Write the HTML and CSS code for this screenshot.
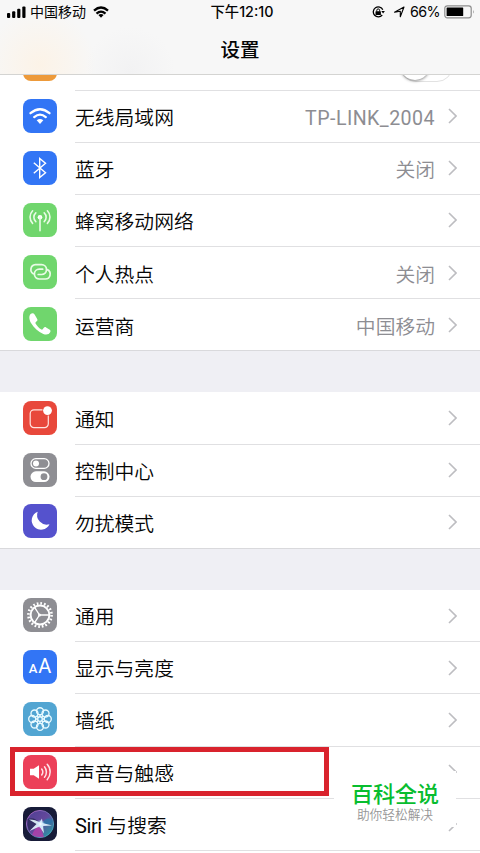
FILE: index.html
```html
<!DOCTYPE html>
<html lang="zh-CN">
<head>
<meta charset="utf-8">
<title>设置</title>
<link rel="stylesheet" href="styles.css">
</head>
<body>
<div class="screen">
  <header class="header">
    <div class="status">
      <div class="status-left">
        <svg class="signal" viewBox="0 0 19 12"><rect x="0" y="7" width="3.2" height="5" rx="1"/><rect x="5.1" y="5.2" width="3.2" height="6.8" rx="1"/><rect x="10.2" y="2.8" width="3.2" height="9.2" rx="1"/><rect x="15.3" y="0.4" width="3.2" height="11.6" rx="1"/></svg>
        <span class="carrier">中国移动</span>
        <svg class="wifi" viewBox="0 0 16 12"><path d="M1 4.600Q8-1.600 15 4.600M3.500 7.600Q8 3.600 12.500 7.600" fill="none" stroke="#000" stroke-width="2.300"/><path d="M5.400 9Q8 6.800 10.600 9L8 11.800Z"/></svg>
      </div>
      <div class="clock">下午12:10</div>
      <div class="status-right">
        <svg class="lock" viewBox="0 0 13 12"><path d="M10.800 3.700A5 5 0 1 0 10.200 9" fill="none" stroke="#000" stroke-width="1.300"/><path d="M9.300 4.900h3.600l-1.800 2.500z"/><rect x="3.500" y="5.200" width="5.400" height="3.900" rx=".5"/><path d="M4.800 5.500V4.300a1.400 1.400 0 0 1 2.800 0v1.200" fill="none" stroke="#000"/></svg>
        <svg class="location" viewBox="0 0 12 12"><path d="M1.500 6.200L11 1 7.300 10.800V5.200Z" fill="none" stroke="#000" stroke-width="1.100" stroke-linejoin="round"/></svg>
        <span class="percent">66%</span>
        <svg class="battery" viewBox="0 0 31 14"><rect x=".8" y=".8" width="26.400" height="12" rx="2.500" fill="none" stroke="#8d8d8d" stroke-width="1.200"/><rect x="2.600" y="2.500" width="16.600" height="8.600" rx=".6"/><path d="M29 4.800q1.400 2 0 4z" fill="#8d8d8d"/></svg>
      </div>
    </div>
    <h1 class="title">设置</h1>
  </header>

  <main class="list">
    <div class="row row-partial">
      <div class="icon orange"></div>
      <div class="cell"><span class="switch"></span></div>
    </div>
    <section class="group">
      <div class="row">
        <svg class="icon blue" viewBox="0 0 34 34"><g fill="none" stroke="#fff" stroke-width="2.300" stroke-linecap="round"><path d="M7.500 14.200Q17 6.200 26.500 14.200M11.200 18.100Q17 13.200 22.800 18.100"/></g><path d="M13.700 21.200Q17 18.600 20.300 21.200L17 25Z" fill="#fff"/></svg>
        <div class="cell"><span class="label">无线局域网</span><span class="value latin">TP-LINK_2004</span><svg class="chevron" viewBox="0 0 9 16"><path d="M1 1l7 7-7 7"/></svg></div>
      </div>
      <div class="row">
        <svg class="icon blue" viewBox="0 0 34 34"><path d="M10.800 11.800L22.500 21.800 16.700 26.500V7.500L22.500 12.200 10.800 22.200" fill="none" stroke="#fff" stroke-width="1.400"/></svg>
        <div class="cell"><span class="label">蓝牙</span><span class="value">关闭</span><svg class="chevron" viewBox="0 0 9 16"><path d="M1 1l7 7-7 7"/></svg></div>
      </div>
      <div class="row">
        <svg class="icon green" viewBox="0 0 34 34"><circle cx="17" cy="14.200" r="2.300" fill="#fff"/><path d="M17 14v13.800M12.800 9.800a6 6 0 0 0 0 8.800M21.200 9.800a6 6 0 0 1 0 8.800M9.600 7.800a9 9 0 0 0 0 12.600M24.400 7.800a9 9 0 0 1 0 12.600" fill="none" stroke="#e9fbe6" stroke-width="1.600" stroke-linecap="round"/></svg>
        <div class="cell"><span class="label">蜂窝移动网络</span><svg class="chevron" viewBox="0 0 9 16"><path d="M1 1l7 7-7 7"/></svg></div>
      </div>
      <div class="row">
        <svg class="icon green" viewBox="0 0 34 34"><g fill="none" stroke="#e9fbe6" stroke-width="1.700" stroke-linecap="round"><path d="M10.300 18.800A4.900 4.900 0 0 1 12.400 9.700h6.200a4.900 4.900 0 0 1 0 9.800h-3.400"/><path d="M24.200 14.600A4.900 4.900 0 0 1 22.300 24h-6a4.900 4.900 0 0 1 0-9.800h3.400"/></g></svg>
        <div class="cell"><span class="label">个人热点</span><span class="value">关闭</span><svg class="chevron" viewBox="0 0 9 16"><path d="M1 1l7 7-7 7"/></svg></div>
      </div>
      <div class="row">
        <svg class="icon green" viewBox="0 0 34 34"><path d="M7.600 7.100C5.800 8.800 6 12.700 8 16c3 5 7.200 9 12.300 10.900 3.200 1.100 5.900.4 7-2 .4-.9.200-1.600-.5-2.100l-3.700-2.400c-.9-.5-1.700-.4-2.300.4l-1.100 1.500c-.5.5-1.100.4-1.700 0-2.200-1.500-4-3.500-5.300-5.600-.4-.7-.4-1.200.2-1.700l1-1c.6-.6.7-1.300.3-2.100l-2.600-4.400c-1-1.600-2.700-1.500-4-.4z" fill="#fff"/></svg>
        <div class="cell"><span class="label">运营商</span><span class="value">中国移动</span><svg class="chevron" viewBox="0 0 9 16"><path d="M1 1l7 7-7 7"/></svg></div>
      </div>
    </section>
    <section class="group spaced">
      <div class="row">
        <svg class="icon red" viewBox="0 0 34 34"><path d="M19.500 8.800H11a3.800 3.800 0 0 0-3.800 3.800v10.200a3.800 3.800 0 0 0 3.800 3.800h10.500a3.800 3.800 0 0 0 3.800-3.800V14.500" fill="none" stroke="#ffe4df" stroke-width="1.200"/><circle cx="24.500" cy="9.600" r="4.400" fill="#fff"/></svg>
        <div class="cell"><span class="label">通知</span><svg class="chevron" viewBox="0 0 9 16"><path d="M1 1l7 7-7 7"/></svg></div>
      </div>
      <div class="row">
        <svg class="icon gray" viewBox="0 0 34 34"><rect x="8" y="5.700" width="18" height="9.600" rx="4.800" fill="none" stroke="#fff" stroke-width="1.300"/><circle cx="13" cy="10.500" r="3" fill="#fff"/><rect x="7.500" y="18.300" width="19" height="10.800" rx="5.400" fill="#fff"/><circle cx="21" cy="23.700" r="3.400" fill="#8e8e93"/></svg>
        <div class="cell"><span class="label">控制中心</span><svg class="chevron" viewBox="0 0 9 16"><path d="M1 1l7 7-7 7"/></svg></div>
      </div>
      <div class="row">
        <svg class="icon purple" viewBox="0 0 34 34"><path d="M14.700 7.700A9.300 9.300 0 1 0 26.500 20.200 9.600 9.600 0 0 1 14.700 7.700Z" fill="#fff"/></svg>
        <div class="cell"><span class="label">勿扰模式</span><svg class="chevron" viewBox="0 0 9 16"><path d="M1 1l7 7-7 7"/></svg></div>
      </div>
    </section>
    <section class="group spaced">
      <div class="row">
        <svg class="icon gray" viewBox="0 0 34 34"><g fill="none" stroke="#fff"><circle cx="17" cy="17" r="9.400" stroke-width="2"/><circle cx="17" cy="17" r="11.600" stroke-width="2.600" stroke-dasharray="1.700 1.944"/><path d="M16 17h10M16.500 17l-5.200-8.200M16.500 17l-5.200 8.200" stroke-width="1.400"/></g><circle cx="16.500" cy="17" r="1.500" fill="#fff"/></svg>
        <div class="cell"><span class="label">通用</span><svg class="chevron" viewBox="0 0 9 16"><path d="M1 1l7 7-7 7"/></svg></div>
      </div>
      <div class="row">
        <div class="icon blue letters"><span class="small-a">A</span><span class="big-a">A</span></div>
        <div class="cell"><span class="label">显示与亮度</span><svg class="chevron" viewBox="0 0 9 16"><path d="M1 1l7 7-7 7"/></svg></div>
      </div>
      <div class="row">
        <svg class="icon cyan" viewBox="0 0 34 34"><g fill="none" stroke="#e8faff" stroke-width="1.350"><circle cx="17" cy="9.200" r="3.500"/><circle cx="22.500" cy="11.500" r="3.500"/><circle cx="24.800" cy="17" r="3.500"/><circle cx="22.500" cy="22.500" r="3.500"/><circle cx="17" cy="24.800" r="3.500"/><circle cx="11.500" cy="22.500" r="3.500"/><circle cx="9.200" cy="17" r="3.500"/><circle cx="11.500" cy="11.500" r="3.500"/><circle cx="17" cy="17" r="2.300"/><path d="M17 12.700v2M17 19.300v2M12.700 17h2M19.300 17h2M14 14l1.400 1.400M18.600 18.600L20 20M20 14l-1.400 1.400M15.400 18.600L14 20"/></g></svg>
        <div class="cell"><span class="label">墙纸</span><svg class="chevron" viewBox="0 0 9 16"><path d="M1 1l7 7-7 7"/></svg></div>
      </div>
      <div class="row">
        <svg class="icon pink" viewBox="0 0 34 34"><path d="M7 13.700h3.700L16 10.300v13.400L10.700 20.300H7z" fill="#fff"/><path d="M18.700 14a5 5 0 0 1 0 6M21.500 11.800a8 8 0 0 1 0 10.400M24.200 9.300a11.500 11.500 0 0 1 0 15.400" fill="none" stroke="#ffe3e8" stroke-width="1.500" stroke-linecap="round"/></svg>
        <div class="cell"><span class="label">声音与触感</span><svg class="chevron" viewBox="0 0 9 16"><path d="M1 1l7 7-7 7"/></svg></div>
        <div class="highlight"></div>
      </div>
      <div class="row">
        <svg class="icon dark" viewBox="0 0 34 34">
          <defs>
            <linearGradient id="orb" x1="0" y1="0" x2="1" y2="1"><stop offset="0" stop-color="#4c3f93"/><stop offset=".48" stop-color="#63479b"/><stop offset="1" stop-color="#19a8a5"/></linearGradient>
            <linearGradient id="ring" x1="0" y1="0" x2="1" y2="1"><stop offset="0" stop-color="#b65abb"/><stop offset=".5" stop-color="#6b70b5"/><stop offset="1" stop-color="#32bdba"/></linearGradient>
            <radialGradient id="core"><stop offset="0" stop-color="#fff"/><stop offset=".4" stop-color="#d9efff" stop-opacity=".8"/><stop offset="1" stop-color="#b6daff" stop-opacity="0"/></radialGradient>
          </defs>
          <circle cx="17" cy="17" r="13.600" fill="url(#orb)" stroke="url(#ring)"/>
          <path d="M4.500 12Q12 9 17 17 9 22 6 24 3.500 18 4.500 12Z" fill="#262653" opacity=".75"/>
          <path d="M18 17Q25 8 30 14 28 19 18 17Z" fill="#2677a9" opacity=".7"/>
          <path d="M17 17Q11 22 9 28 15 31 21 30Z" fill="#bf39ab" opacity=".75"/>
          <path d="M6 12.500Q13 12.500 16.500 15.500L19 11.500 19.500 16 29 18.500 20 19 21 26.500 16.500 19.500 6.500 24 13.500 17Z" fill="#e5f6ff" opacity=".9"/>
          <circle cx="17.500" cy="17" r="4.500" fill="url(#core)"/>
        </svg>
        <div class="cell"><span class="label siri"><span>Siri</span> 与搜索</span><svg class="chevron" viewBox="0 0 9 16"><path d="M1 1l7 7-7 7"/></svg></div>
      </div>
      <div class="row"></div>
    </section>
  </main>
  <aside class="watermark"><strong>百科全说</strong><span>助你轻松解决</span></aside>
</div>
</body>
</html>
```
FILE: styles.css
```css
* { box-sizing: border-box; }
body { margin: 0; background: #fff; color: #050505; font-family: Inter, "Noto Sans CJK SC", sans-serif; }
.screen { position: relative; width: 480px; height: 853px; overflow: hidden; background: #fff; }

.header {
  height: 75px;
  border-bottom: 1px solid #d4d4d2;
  background: radial-gradient(circle at 40px 65px, #fcf3e7 0, rgba(253, 241, 225, 0) 56px), radial-gradient(circle at 130px 72px, #f2f2f3 0, rgba(240, 240, 241, 0) 45px), #f7f7f7;
}
.status { display: grid; grid-template-columns: 1fr auto 1fr; align-items: center; height: 24px; padding: 0 5px 0 7px; font-size: 14px; }
.status-left, .status-right { display: flex; align-items: center; }
.status-right { justify-content: flex-end; }
.signal { width: 19px; height: 12px; margin: -1px 4px 0 0; }
.carrier { line-height: 24px; }
.wifi { width: 16px; height: 12px; margin: -1px 0 0 7px; }
.clock { margin-left: 2px; font-size: 14.300px; font-weight: 500; line-height: 24px; }
.lock { width: 13px; height: 12px; margin-right: 8px; }
.location { width: 12px; height: 12px; margin-right: 5px; }
.percent { font-size: 14px; margin-right: 4px; line-height: 24px; letter-spacing: -.6px; font-size: 14.300px; }
.battery { width: 31px; height: 14px; }
.title { margin: 10px 0 0; font-size: 19.500px; font-weight: 500; line-height: 32px; text-align: center; }

.list { display: flex; flex-direction: column; }
.row { position: relative; display: flex; align-items: center; height: 52.170px; padding-left: 23px; }
.row-partial { height: 15.500px; overflow: hidden; align-items: flex-end; }
.row-partial .icon { margin-bottom: 10px; }
.row-partial .cell { align-items: flex-end; border-bottom: 1px solid #e0e0e2; }
.switch { width: 53px; height: 32px; margin: 0 4px 8px auto; border: 1.500px solid #e2e2e2; border-radius: 16px; background: #fff; }
.switch::before { content: ""; display: block; width: 30px; height: 30px; margin: -.5px 0 0 -1px; border-radius: 50%; background: #fff; box-shadow: 0 1px 3px rgba(0, 0, 0, .45); }
.icon { flex: none; width: 34px; height: 34px; margin-bottom: 2px; border-radius: 8px; }
.cell { flex: 1; align-self: stretch; display: flex; align-items: center; margin-left: 18px; padding-right: 23px; border-bottom: 1px solid #e0e0e2; }
.group .row:last-child .cell { border-bottom: 0; }
.group .row:last-child { height: 51.300px; }
.group { border-bottom: 1px solid #d9d9dc; }
.spaced { border-top: 41px solid #efeff4; }
.label { font-size: 19.800px; line-height: 30px; margin-top: 4px; font-weight: 350; white-space: nowrap; }
.spaced .label { margin-top: 3px; }
.siri span { display: inline-block; font-family: Roboto, sans-serif; font-size: 20px; font-weight: 400; letter-spacing: -.4px; }
.value { margin: 4px 0 0 auto; font-size: 19.800px; line-height: 30px; font-weight: 350; color: #8d8d92; }
.latin { margin-top: 5px; font-family: Roboto, sans-serif; font-size: 19.600px; font-weight: 400; letter-spacing: .45px; }
.chevron { width: 9px; height: 16px; margin-left: auto; fill: none; stroke: #bdbdc1; stroke-width: 1.600; }
.value + .chevron { margin-left: 13px; }

.orange { background: #ed9a3a; }
.blue { background: #3275f5; }
.green { background: #70d66d; }
.red { background: #e8483b; }
.gray { background: #8e8e93; }
.purple { background: #5552cd; }
.cyan { background: #52a5d2; }
.pink { background: #ec4059; }
.dark { background: #171b38; }
.letters { display: flex; align-items: baseline; justify-content: center; color: #fff; line-height: 32px; }
.small-a { font-family: Roboto, sans-serif; font-size: 13px; font-weight: 500; }
.big-a { margin-left: 1px; font-family: Roboto, sans-serif; font-size: 20px; }

.highlight { position: absolute; left: 10px; top: .5px; width: 319px; height: 49px; border: 5px solid #d9232d; }
.watermark { position: absolute; left: 334px; top: 771px; width: 122px; height: 56px; display: flex; flex-direction: column; align-items: center; background: #fff; }
.watermark strong { margin-top: 7px; font-size: 22px; font-weight: 500; line-height: 32px; color: #08bd2f; }
.watermark span { font-size: 12.700px; line-height: 10px; font-weight: 350; color: #969696; white-space: nowrap; }
```
